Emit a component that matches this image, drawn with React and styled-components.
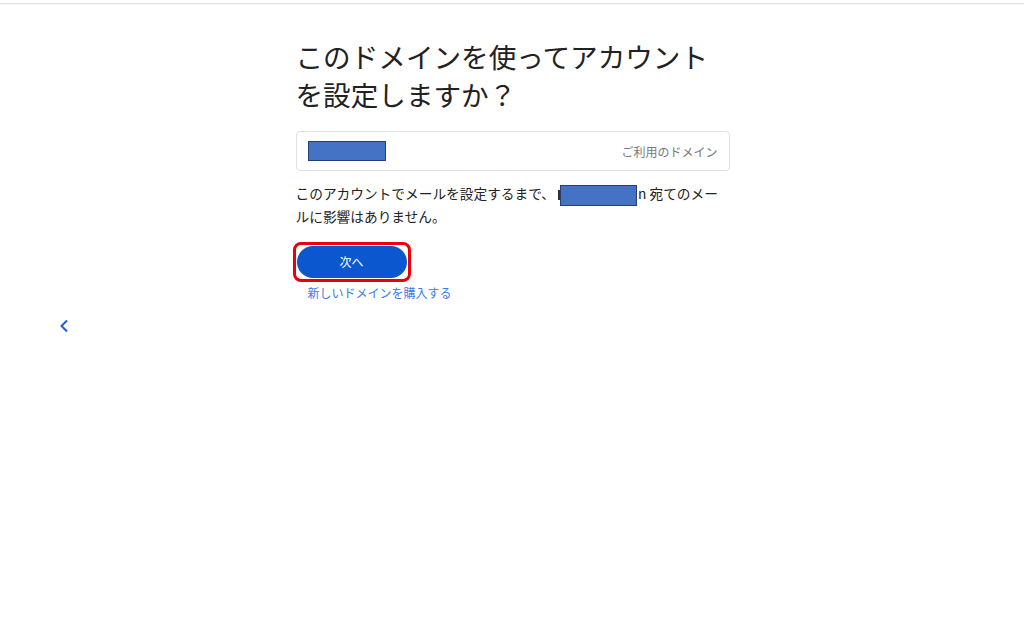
import React from "react";
import styled, { createGlobalStyle } from "styled-components";

const GlobalStyle = createGlobalStyle`
  html, body {
    margin: 0;
    padding: 0;
    background: #ffffff;
    font-family: "Noto Sans CJK JP", "Noto Sans", "Liberation Sans", sans-serif;
    color: #202124;
  }
`;

const Page = styled.div`
  width: 1024px;
  height: 623px;
  display: flex;
  flex-direction: column;
  background: #fff;
`;

const TopBar = styled.div`
  height: 3px;
  border-bottom: 1px solid #e2e2e2;
  box-shadow: 0 1px 1px rgba(0, 0, 0, 0.04);
`;

const Main = styled.div`
  display: flex;
  justify-content: center;
  padding-top: 33px;
`;

const Column = styled.div`
  width: 434px;
  margin-left: 1px;
  display: flex;
  flex-direction: column;
`;

const Title = styled.h1`
  margin: 0;
  font-size: 27.6px;
  line-height: 38px;
  font-weight: 400;
  color: #222;
`;

const DomainBox = styled.div`
  margin-top: 18px;
  height: 38px;
  border: 1px solid #e0e0e0;
  border-radius: 4px;
  display: flex;
  align-items: center;
  justify-content: space-between;
  padding: 0 11px 0 11px;
`;

const Redact = styled.span`
  display: inline-block;
  width: ${(p) => p.$w}px;
  height: ${(p) => p.$h}px;
  background: #4472c4;
  border: 1px solid #253f70;
  box-sizing: border-box;
  vertical-align: middle;
`;

const Placeholder = styled.span`
  font-size: 12px;
  color: #777;
`;

const Note = styled.p`
  margin: 12px 0 0;
  font-size: 13.7px;
  line-height: 21px;
  color: #222;
`;

const Fragment = styled.span`
  display: inline-block;
  width: 2px;
  height: 10px;
  background: #333;
  vertical-align: middle;
  margin-left: 3px;
`;

const Tail = styled.span`
  margin-left: 1px;
`;

const Actions = styled.div`
  margin-top: 15px;
  display: flex;
  flex-direction: column;
  align-items: flex-start;
`;

const Highlight = styled.div`
  margin-left: -3px;
  border: 3px solid #e8000b;
  border-radius: 8px;
  padding: 1px;
`;

const PrimaryButton = styled.button`
  width: 110px;
  height: 32px;
  border: none;
  border-radius: 16px;
  background: #0b57d0;
  color: #fff;
  font-family: inherit;
  font-size: 12px;
  cursor: pointer;
`;

const BuyLink = styled.a`
  margin: 3px 0 0 12px;
  font-size: 12px;
  line-height: 16px;
  color: #3b7ce9;
  text-decoration: none;
`;

const BackRow = styled.div`
  padding: 15px 0 0 56px;
`;

const BackButton = styled.button`
  width: 16px;
  height: 20px;
  padding: 0;
  border: none;
  background: none;
  display: flex;
  align-items: center;
  justify-content: center;
  cursor: pointer;
`;

export default function App() {
  return (
    <>
      <GlobalStyle />
      <Page>
        <TopBar />
        <Main>
          <Column>
            <Title>このドメインを使ってアカウントを設定しますか？</Title>
            <DomainBox>
              <Redact $w={78} $h={20} />
              <Placeholder>ご利用のドメイン</Placeholder>
            </DomainBox>
            <Note>
              このアカウントでメールを設定するまで、
              <Fragment />
              <Redact $w={77} $h={21} />
              <Tail>n 宛てのメールに影響はありません。</Tail>
            </Note>
            <Actions>
              <Highlight>
                <PrimaryButton>次へ</PrimaryButton>
              </Highlight>
              <BuyLink href="#">新しいドメインを購入する</BuyLink>
            </Actions>
          </Column>
        </Main>
        <BackRow>
          <BackButton aria-label="戻る">
            <svg width="10" height="14" viewBox="0 0 10 14">
              <path d="M8 1.5 L2.5 7 L8 12.5" fill="none" stroke="#1a5fd0" strokeWidth="2" />
            </svg>
          </BackButton>
        </BackRow>
      </Page>
    </>
  );
}
